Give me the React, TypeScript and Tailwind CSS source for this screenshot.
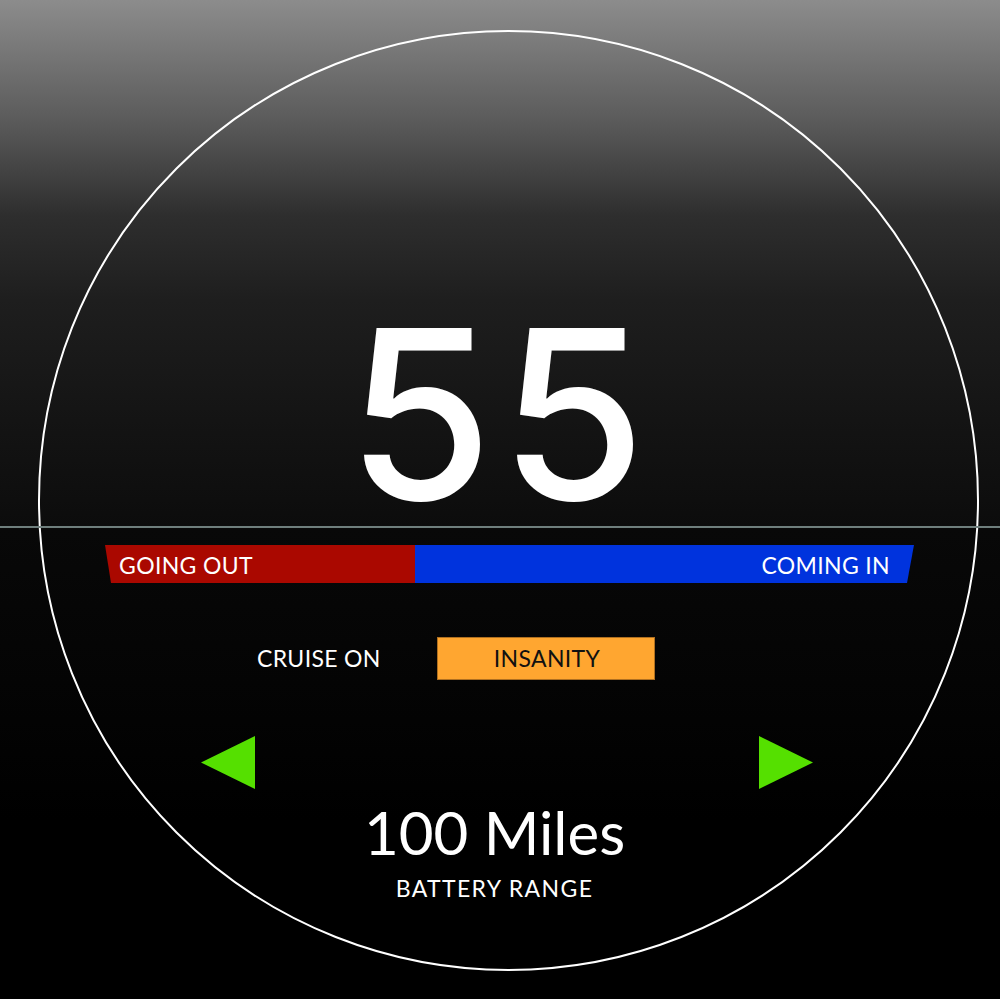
import { ReactNode } from "react";

const FONT = "font-['Lato','Inter',sans-serif]";

function Triangle({ dir }: { dir: "left" | "right" }) {
  const points = dir === "left" ? "0,26.5 54,0 54,53" : "0,0 54,26.5 0,53";
  return (
    <svg width="54" height="53" viewBox="0 0 54 53">
      <polygon points={points} fill="#55e000" />
    </svg>
  );
}

function Label({ children, className }: { children: ReactNode; className?: string }) {
  return (
    <span className={`text-[23px] leading-none tracking-[0.015em] ${className ?? ""}`}>
      {children}
    </span>
  );
}

function App() {
  return (
    <div
      className={`relative h-[999px] w-[1000px] overflow-hidden bg-[linear-gradient(to_bottom,#8c8c8c_0px,#5b5b5b_120px,#2e2e2e_215px,#1e1e1e_300px,#141414_420px,#0c0c0c_526px,#080808_530px,#030303_720px,#000_820px)] text-white ${FONT}`}
    >
      {/* horizon line over the dial */}
      <div className="absolute left-0 right-0 top-[526px] z-10 h-[2px] bg-[#6f7f7d]" />

      <div className="ml-[38px] mt-[30px] flex h-[941px] w-[941px] flex-col rounded-full border-2 border-white">
        {/* speed */}
        <div className="mt-[264px] h-[235px] pr-[17px] text-center font-['Inter',sans-serif] text-[236px] font-medium leading-none tracking-[0.03em]">
          55
        </div>

        {/* direction bar */}
        <div className="ml-[65px] mt-[14px] flex h-[38px] w-[809px]">
          <div className="flex w-[310px] items-center bg-[#aa0800] pl-[14px] [clip-path:polygon(0_0,100%_0,100%_100%,6px_100%)]">
            <Label className="pt-[2px]">GOING OUT</Label>
          </div>
          <div className="flex flex-1 items-center justify-end bg-[#0033dd] pr-[24px] [clip-path:polygon(0_0,100%_0,calc(100%-7px)_100%,0_100%)]">
            <Label className="pt-[2px]">COMING IN</Label>
          </div>
        </div>

        {/* modes */}
        <div className="ml-[217px] mt-[54px] flex items-center">
          <Label className="w-[128px] whitespace-nowrap">CRUISE ON</Label>
          <div className="ml-[52px] flex h-[43px] w-[218px] items-center justify-center border border-[#b07020] bg-[#ffa630] pl-[2px] text-[#111]">
            <Label>INSANITY</Label>
          </div>
        </div>

        {/* arrows */}
        <div className="ml-[161px] mr-[164px] mt-[56px] flex justify-between">
          <Triangle dir="left" />
          <Triangle dir="right" />
        </div>

        {/* range */}
        <div className="mt-[13px] flex flex-col items-center pr-[28px]">
          <div className="text-[60px] leading-none">100 Miles</div>
          <span className="mt-[15px] text-[23px] leading-none tracking-[0.06em]">BATTERY RANGE</span>
        </div>
      </div>
    </div>
  );
}

export default App;
